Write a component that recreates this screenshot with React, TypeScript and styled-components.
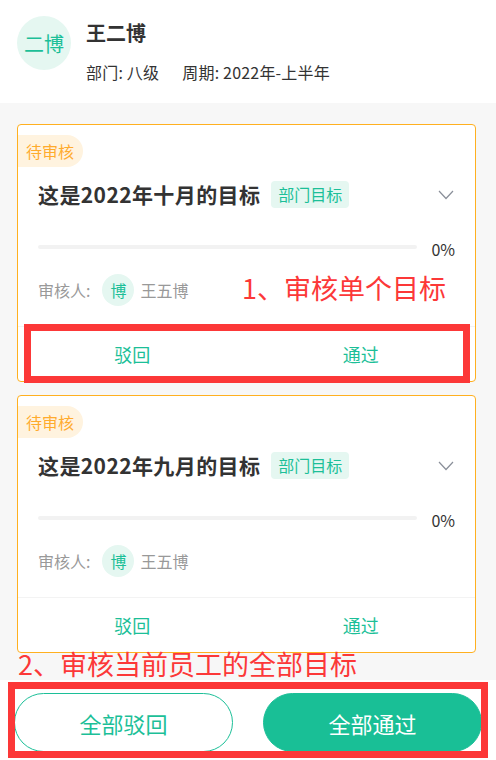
import React from 'react';
import styled, { createGlobalStyle } from 'styled-components';

const GlobalStyle = createGlobalStyle`
  * { box-sizing: border-box; }
  body {
    margin: 0;
    background: #f7f7f7;
    font-family: "Noto Sans CJK SC", "Noto Sans", sans-serif;
    color: #333;
  }
`;

const Page = styled.div`
  position: relative;
  width: 496px;
  height: 760px;
  overflow: hidden;
  background: #f7f7f7;
  display: flex;
  flex-direction: column;
`;

const Header = styled.div`
  height: 103px;
  background: #fff;
  display: flex;
  padding: 16px 17px 0;
  gap: 15px;
`;

const Avatar = styled.div<{ $size: number; $font: number }>`
  width: ${(p) => p.$size}px;
  height: ${(p) => p.$size}px;
  border-radius: 50%;
  background: #e5f7f1;
  color: #1cbf98;
  font-size: ${(p) => p.$font}px;
  display: flex;
  align-items: center;
  justify-content: center;
  flex-shrink: 0;
`;

const HeaderInfo = styled.div`
  display: flex;
  flex-direction: column;
  padding-top: 3px;
`;

const Name = styled.div`
  font-size: 20px;
  font-weight: 700;
  line-height: 28px;
  color: #333;
`;

const Meta = styled.div`
  margin-top: 13px;
  font-size: 16px;
  line-height: 24px;
  color: #333;
  display: flex;
  gap: 23px;
  letter-spacing: 0.2px;
`;

const List = styled.div`
  padding: 21px 20px 0 17px;
  display: flex;
  flex-direction: column;
  gap: 13px;
`;

const Card = styled.div`
  background: #fff;
  border: 1px solid #ffb020;
  border-radius: 4px;
  display: flex;
  flex-direction: column;
`;

const Badge = styled.div`
  align-self: flex-start;
  margin-top: 10px;
  height: 32px;
  padding: 0 9px 0 8px;
  background: #fff3df;
  color: #ffab2e;
  font-size: 16px;
  line-height: 32px;
  border-radius: 0 16px 16px 0;
`;

const CardBody = styled.div`
  padding: 0 20px 20px 20px;
  display: flex;
  flex-direction: column;
`;

const TitleRow = styled.div`
  margin-top: 14px;
  height: 27px;
  display: flex;
  align-items: center;
`;

const Title = styled.div`
  font-size: 21px;
  font-weight: 700;
  letter-spacing: 0.4px;
  color: #333;
  line-height: 27px;
`;

const Tag = styled.div`
  margin-left: 11px;
  height: 27px;
  padding: 0 7px;
  border-radius: 4px;
  background: #e5f7f1;
  color: #1cbf98;
  font-size: 16px;
  line-height: 27px;
`;

const Chevron = styled.svg`
  margin-left: auto;
  margin-right: 1px;
`;

const ProgressRow = styled.div`
  margin-top: 28px;
  height: 22px;
  display: flex;
  align-items: center;
  gap: 14px;
`;

const Track = styled.div`
  flex: 1;
  height: 4px;
  border-radius: 2px;
  background: #f2f2f2;
`;

const Percent = styled.div`
  font-size: 16px;
  color: #333;
  line-height: 22px;
  margin-top: 3px;
`;

const ReviewerRow = styled.div`
  margin-top: 16px;
  height: 32px;
  display: flex;
  align-items: center;
  font-size: 16px;
  color: #999;
`;

const ReviewerLabel = styled.span`
  margin-right: 12px;
`;

const ReviewerName = styled.span`
  margin-left: 6px;
`;

const CardFooter = styled.div`
  height: 55px;
  border-top: 1px solid #f3f3f3;
  display: grid;
  grid-template-columns: 1fr 1fr;
`;

const FooterAction = styled.button`
  border: none;
  background: none;
  font-family: inherit;
  font-size: 18px;
  color: #1cbf98;
  cursor: pointer;
  padding: 0;
`;

const BottomBar = styled.div`
  margin-top: auto;
  height: 80px;
  background: #fff;
  display: grid;
  grid-template-columns: 1fr 1fr;
  gap: 30px;
  padding: 13px 14px 8px;
`;

const BigButton = styled.button<{ $primary?: boolean }>`
  height: 59px;
  border-radius: 30px;
  font-family: inherit;
  font-size: 22px;
  cursor: pointer;
  border: 1px solid #1cbf98;
  background: ${(p) => (p.$primary ? '#19bf96' : '#fff')};
  color: ${(p) => (p.$primary ? '#fff' : '#1cbf98')};
`;

const Note = styled.div<{ $x: number; $y: number }>`
  position: absolute;
  left: ${(p) => p.$x}px;
  top: ${(p) => p.$y}px;
  font-size: 27px;
  line-height: 36px;
  color: #fc3838;
  white-space: nowrap;
`;

const Frame = styled.div<{ $x: number; $y: number; $w: number; $h: number }>`
  position: absolute;
  left: ${(p) => p.$x}px;
  top: ${(p) => p.$y}px;
  width: ${(p) => p.$w}px;
  height: ${(p) => p.$h}px;
  border: 7px solid #fc3838;
`;

type Goal = { title: string };

const goals: Goal[] = [
  { title: '这是2022年十月的目标' },
  { title: '这是2022年九月的目标' },
];

const GoalCard = ({ goal }: { goal: Goal }) => (
  <Card>
    <Badge>待审核</Badge>
    <CardBody>
      <TitleRow>
        <Title>{goal.title}</Title>
        <Tag>部门目标</Tag>
        <Chevron width="16" height="10" viewBox="0 0 16 10">
          <polyline points="1,1 8,8.5 15,1" fill="none" stroke="#8a8f99" strokeWidth="1.2" />
        </Chevron>
      </TitleRow>
      <ProgressRow>
        <Track />
        <Percent>0%</Percent>
      </ProgressRow>
      <ReviewerRow>
        <ReviewerLabel>审核人:</ReviewerLabel>
        <Avatar $size={32} $font={16}>博</Avatar>
        <ReviewerName>王五博</ReviewerName>
      </ReviewerRow>
    </CardBody>
    <CardFooter>
      <FooterAction>驳回</FooterAction>
      <FooterAction>通过</FooterAction>
    </CardFooter>
  </Card>
);

const App = () => {
  return (
    <>
      <GlobalStyle />
      <Page>
        <Header>
          <Avatar $size={54} $font={20}>二博</Avatar>
          <HeaderInfo>
            <Name>王二博</Name>
            <Meta>
              <span>部门: 八级</span>
              <span>周期: 2022年-上半年</span>
            </Meta>
          </HeaderInfo>
        </Header>
        <List>
          {goals.map((g) => (
            <GoalCard key={g.title} goal={g} />
          ))}
        </List>
        <BottomBar>
          <BigButton>全部驳回</BigButton>
          <BigButton $primary>全部通过</BigButton>
        </BottomBar>
        <Note $x={242} $y={270}>1、审核单个目标</Note>
        <Frame $x={24} $y={324} $w={446} $h={59} />
        <Note $x={18} $y={646}>2、审核当前员工的全部目标</Note>
        <Frame $x={8} $y={682} $w={480} $h={76} />
      </Page>
    </>
  );
};

export default App;
